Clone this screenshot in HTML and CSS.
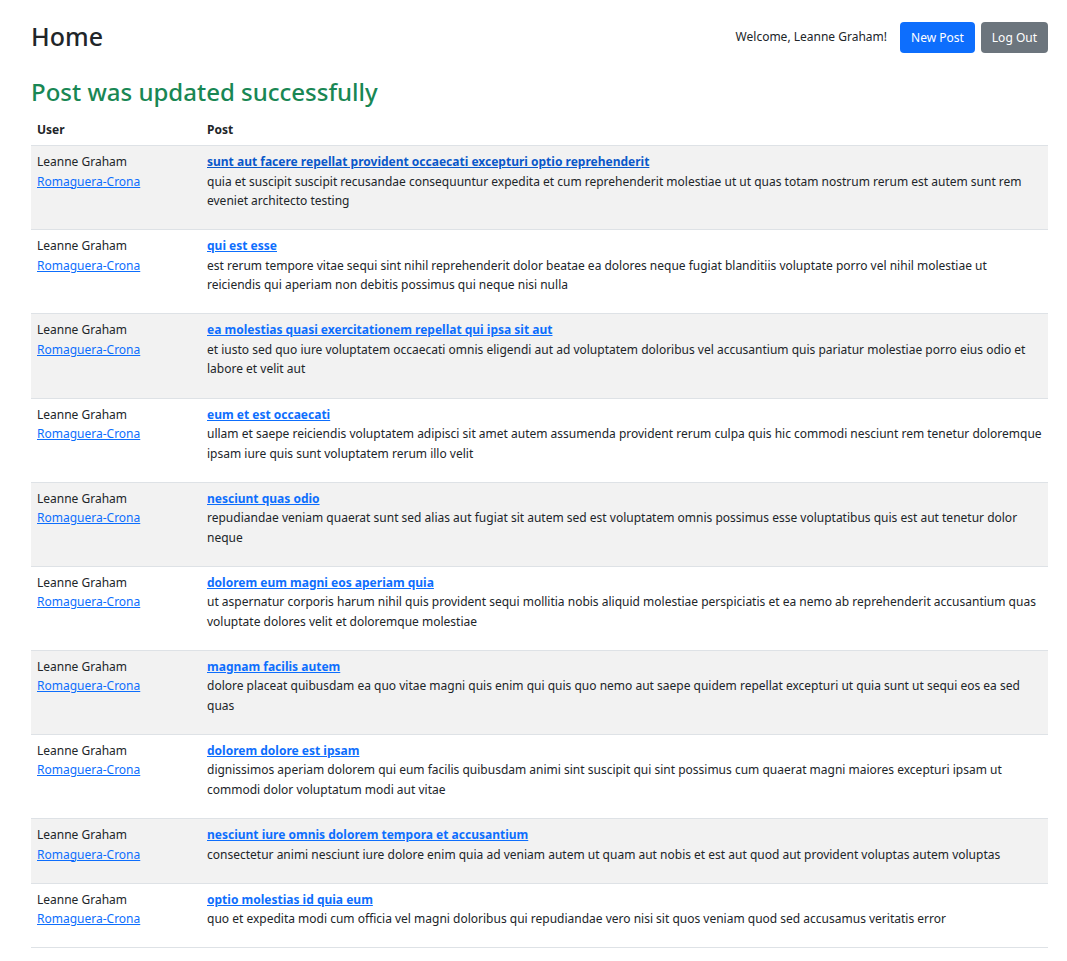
FILE: index.html
```html
<!DOCTYPE html>
<html lang="en">
<head>
<meta charset="utf-8">
<title>Home</title>
<link rel="stylesheet" href="styles.css">
</head>
<body>
<div class="page">
  <header class="topbar">
    <h1 class="title">Home</h1>
    <div class="actions">
      <span class="welcome">Welcome, Leanne Graham!</span>
      <a class="btn btn-primary" href="#">New Post</a>
      <a class="btn btn-secondary" href="#">Log Out</a>
    </div>
  </header>
  <h2 class="flash">Post was updated successfully</h2>
  <table class="posts">
    <thead>
      <tr><th class="col-user">User</th><th>Post</th></tr>
    </thead>
    <tbody>
      <tr>
        <td><div>Leanne Graham</div><a href="#" class="company">Romaguera-Crona</a></td>
        <td><a href="#" class="post-title visited">sunt aut facere repellat provident occaecati excepturi optio reprehenderit</a><p>quia et suscipit suscipit recusandae consequuntur expedita et cum reprehenderit molestiae ut ut quas totam nostrum rerum est autem sunt rem eveniet architecto testing</p></td>
      </tr>
      <tr>
        <td><div>Leanne Graham</div><a href="#" class="company">Romaguera-Crona</a></td>
        <td><a href="#" class="post-title">qui est esse</a><p>est rerum tempore vitae sequi sint nihil reprehenderit dolor beatae ea dolores neque fugiat blanditiis voluptate porro vel nihil molestiae ut reiciendis qui aperiam non debitis possimus qui neque nisi nulla</p></td>
      </tr>
      <tr>
        <td><div>Leanne Graham</div><a href="#" class="company">Romaguera-Crona</a></td>
        <td><a href="#" class="post-title">ea molestias quasi exercitationem repellat qui ipsa sit aut</a><p>et iusto sed quo iure voluptatem occaecati omnis eligendi aut ad voluptatem doloribus vel accusantium quis pariatur molestiae porro eius odio et labore et velit aut</p></td>
      </tr>
      <tr>
        <td><div>Leanne Graham</div><a href="#" class="company">Romaguera-Crona</a></td>
        <td><a href="#" class="post-title">eum et est occaecati</a><p>ullam et saepe reiciendis voluptatem adipisci sit amet autem assumenda provident rerum culpa quis hic commodi nesciunt rem tenetur doloremque ipsam iure quis sunt voluptatem rerum illo velit</p></td>
      </tr>
      <tr>
        <td><div>Leanne Graham</div><a href="#" class="company">Romaguera-Crona</a></td>
        <td><a href="#" class="post-title">nesciunt quas odio</a><p>repudiandae veniam quaerat sunt sed alias aut fugiat sit autem sed est voluptatem omnis possimus esse voluptatibus quis est aut tenetur dolor neque</p></td>
      </tr>
      <tr>
        <td><div>Leanne Graham</div><a href="#" class="company">Romaguera-Crona</a></td>
        <td><a href="#" class="post-title">dolorem eum magni eos aperiam quia</a><p>ut aspernatur corporis harum nihil quis provident sequi mollitia nobis aliquid molestiae perspiciatis et ea nemo ab reprehenderit accusantium quas voluptate dolores velit et doloremque molestiae</p></td>
      </tr>
      <tr>
        <td><div>Leanne Graham</div><a href="#" class="company">Romaguera-Crona</a></td>
        <td><a href="#" class="post-title">magnam facilis autem</a><p>dolore placeat quibusdam ea quo vitae magni quis enim qui quis quo nemo aut saepe quidem repellat excepturi ut quia sunt ut sequi eos ea sed quas</p></td>
      </tr>
      <tr>
        <td><div>Leanne Graham</div><a href="#" class="company">Romaguera-Crona</a></td>
        <td><a href="#" class="post-title">dolorem dolore est ipsam</a><p>dignissimos aperiam dolorem qui eum facilis quibusdam animi sint suscipit qui sint possimus cum quaerat magni maiores excepturi ipsam ut commodi dolor voluptatum modi aut vitae</p></td>
      </tr>
      <tr>
        <td><div>Leanne Graham</div><a href="#" class="company">Romaguera-Crona</a></td>
        <td><a href="#" class="post-title">nesciunt iure omnis dolorem tempora et accusantium</a><p>consectetur animi nesciunt iure dolore enim quia ad veniam autem ut quam aut nobis et est aut quod aut provident voluptas autem voluptas</p></td>
      </tr>
      <tr>
        <td><div>Leanne Graham</div><a href="#" class="company">Romaguera-Crona</a></td>
        <td><a href="#" class="post-title">optio molestias id quia eum</a><p>quo et expedita modi cum officia vel magni doloribus qui repudiandae vero nisi sit quos veniam quod sed accusamus veritatis error</p></td>
      </tr>
    </tbody>
  </table>
</div>
</body>
</html>
```

FILE: styles.css
```css
* { box-sizing: border-box; }
html, body { margin: 0; padding: 0; background: #fff; }
body {
  font-family: "Noto Sans", "Open Sans", sans-serif;
  color: #212529;
  font-size: 12px;
  line-height: 19.5px;
}
.page {
  padding: 22px 19px 0 31px;
}
.topbar {
  display: flex;
  justify-content: space-between;
  align-items: center;
}
.title {
  margin: -3px 0 0;
  font-size: 25px;
  font-weight: 500;
  line-height: 1.2;
}
.actions {
  display: flex;
  align-items: center;
  gap: 6px;
}
.welcome {
  font-size: 12px;
  margin-right: 7px;
  margin-top: -2px;
}
.btn {
  display: inline-block;
  height: 31px;
  line-height: 31px;
  padding: 0 11px;
  border-radius: 4px;
  color: #fff;
  text-decoration: none;
  font-size: 12px;
}
.btn-primary { background: #0d6efd; }
.btn-secondary { background: #6c757d; }
.flash {
  margin: 25px 0 0;
  font-size: 24px;
  font-weight: 500;
  line-height: 1.2;
  color: #198754;
}
.posts {
  width: 100%;
  border-collapse: collapse;
  margin-top: 7px;
}
.posts th {
  text-align: left;
  font-weight: 700;
  padding: 6px 6px 6px;
  border-bottom: 1px solid #dee2e6;
  vertical-align: bottom;
}
.posts .col-user { width: 170px; }
.posts td {
  vertical-align: top;
  padding: 6px 6px 18.6px;
  border-bottom: 1px solid #dee2e6;
}
.posts tbody tr:nth-child(odd) td { background: #f2f2f2; }
.posts p { margin: 0; }
.company { color: #0d6efd; }
.post-title {
  color: #0d6efd;
  font-weight: 700;
}
.post-title.visited { color: #0a58ca; }
```
